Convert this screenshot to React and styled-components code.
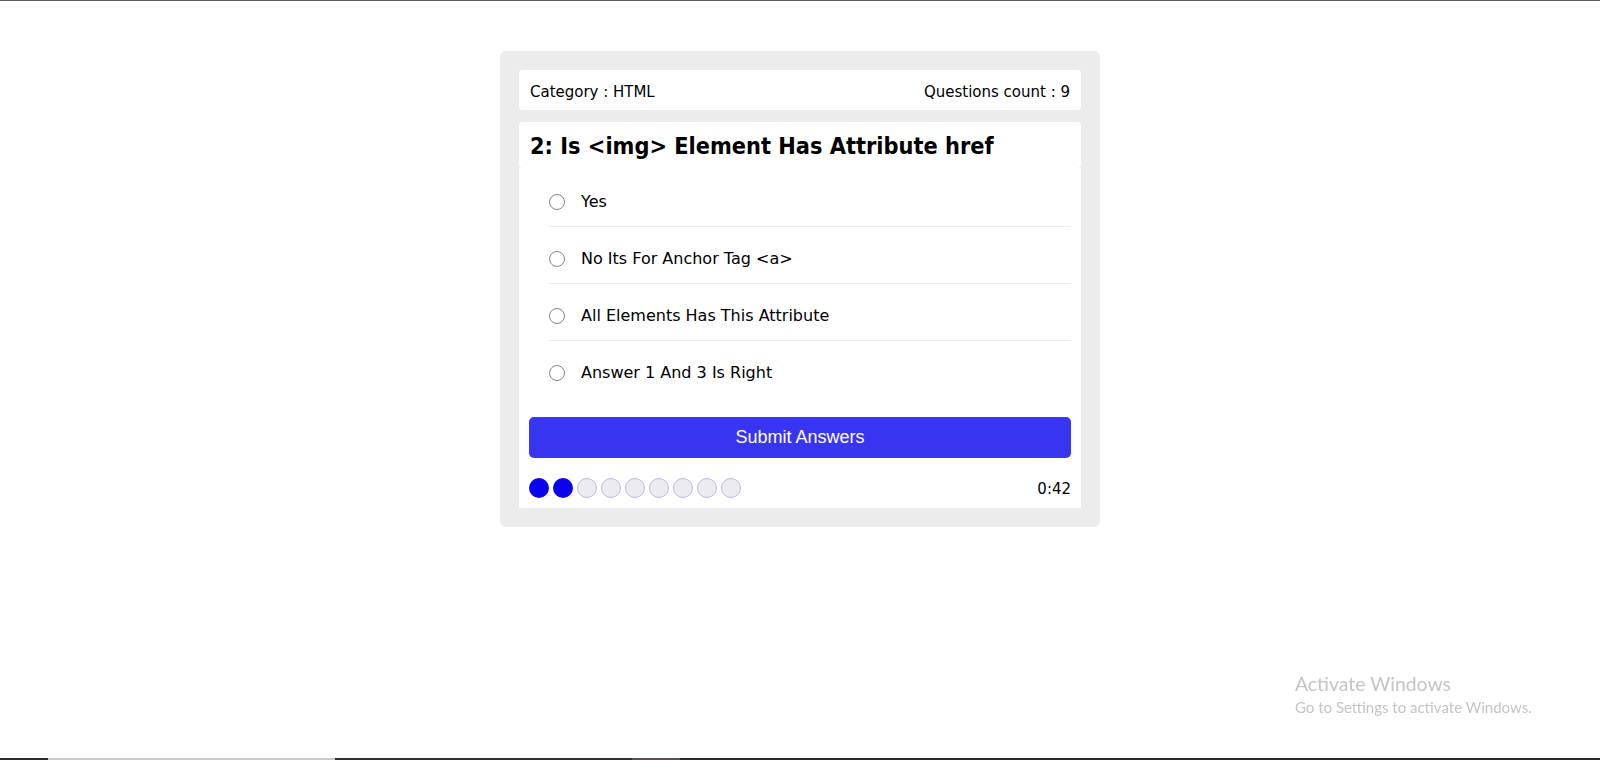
import React from "react";
import styled, { createGlobalStyle } from "styled-components";

const GlobalStyle = createGlobalStyle`
  html, body { margin: 0; padding: 0; background: #ffffff; }
  * { box-sizing: border-box; }
`;

const Screen = styled.div`
  height: 100vh;
  display: flex;
  flex-direction: column;
  overflow: hidden;
`;

const TopEdge = styled.div`
  height: 1px;
  background: #5c5c5c;
  flex: none;
`;

const Stage = styled.main`
  flex: 1;
  display: flex;
  justify-content: center;
  align-items: flex-start;
  padding-top: 50px;
`;

const Taskbar = styled.div`
  height: 2px;
  flex: none;
  background: linear-gradient(
    to right,
    #2d2d2d 0 48px,
    #c9c9c9 48px 335px,
    #2f2f2f 335px 632px,
    #5a5050 632px 680px,
    #2a2a2a 680px 100%
  );
`;

const Card = styled.section`
  width: 600px;
  padding: 19px;
  background: #ececec;
  border-radius: 6px;
`;

const InfoBar = styled.div`
  display: flex;
  justify-content: space-between;
  align-items: center;
  height: 40px;
  padding: 2px 11px 0;
  background: #ffffff;
  border-radius: 4px;
  font-family: "DejaVu Sans Condensed", "DejaVu Sans", sans-serif;
  font-stretch: condensed;
  font-size: 16.67px;
  color: #000;
`;

const QuestionTitle = styled.h2`
  margin: 12px 0 0;
  padding: 9px 11px 7px;
  height: 46px;
  line-height: 30px;
  background: #ffffff;
  border-radius: 4px;
  font-family: "DejaVu Sans Condensed", "DejaVu Sans", sans-serif;
  font-stretch: condensed;
  font-weight: bold;
  font-size: 23.3px;
  color: #000;
  white-space: nowrap;
`;

const AnswersArea = styled.div`
  background: #ffffff;
  padding: 2px 10px 0 30px;
`;

const AnswerRow = styled.label`
  display: flex;
  align-items: center;
  padding: 22px 0 14px;
  border-bottom: 1px solid #ececec;
  &:last-child {
    border-bottom: none;
  }
`;

const Radio = styled.input.attrs({ type: "radio" })`
  appearance: none;
  -webkit-appearance: none;
  width: 16px;
  height: 16px;
  margin: 0 16px 0 0;
  border: 1px solid #858585;
  border-radius: 50%;
  background: #fff;
  flex: none;
`;

const AnswerText = styled.span`
  font-family: "DejaVu Sans", Verdana, sans-serif;
  font-size: 16px;
  line-height: 20px;
  color: #000;
`;

const SubmitArea = styled.div`
  background: #ffffff;
  padding: 20px 10px 10px;
`;

const SubmitButton = styled.button`
  display: block;
  width: 100%;
  height: 41px;
  border: none;
  border-radius: 5px;
  background: #3835f1;
  color: #ffffff;
  font-family: "Liberation Sans", Arial, sans-serif;
  font-size: 18px;
  cursor: pointer;
`;

const Footer = styled.div`
  display: flex;
  justify-content: space-between;
  align-items: center;
  margin-top: 20px;
  height: 20px;
`;

const Bullets = styled.div`
  display: flex;
  gap: 4px;
`;

const Bullet = styled.span`
  width: 20px;
  height: 20px;
  border-radius: 50%;
  background: ${(p) => (p.$done ? "#0a03ee" : "#ebebeb")};
  border: ${(p) => (p.$done ? "none" : "1.3px solid #b8b6f2")};
`;

const Timer = styled.span`
  font-family: "DejaVu Sans Condensed", "DejaVu Sans", sans-serif;
  font-stretch: condensed;
  font-size: 16.67px;
  color: #000;
`;

const Watermark = styled.div`
  position: fixed;
  left: 1295px;
  top: 671px;
  font-family: Lato, "Open Sans", sans-serif;
  color: #c4c4c4;
  pointer-events: none;
`;

const WatermarkTitle = styled.div`
  font-size: 19.4px;
  line-height: 26px;
`;

const WatermarkSub = styled.div`
  font-size: 15px;
  line-height: 20px;
`;

const answers = [
  "Yes",
  "No Its For Anchor Tag <a>",
  "All Elements Has This Attribute",
  "Answer 1 And 3 Is Right",
];

export default function App() {
  const total = 9;
  const current = 2;
  return (
    <>
      <GlobalStyle />
      <Screen>
        <TopEdge />
        <Stage>
          <Card>
            <InfoBar>
              <span>Category : HTML</span>
              <span>Questions count : {total}</span>
            </InfoBar>
            <QuestionTitle>2: Is &lt;img&gt; Element Has Attribute href</QuestionTitle>
            <AnswersArea>
              {answers.map((a, i) => (
                <AnswerRow key={i}>
                  <Radio name="question" />
                  <AnswerText>{a}</AnswerText>
                </AnswerRow>
              ))}
            </AnswersArea>
            <SubmitArea>
              <SubmitButton>Submit Answers</SubmitButton>
              <Footer>
                <Bullets>
                  {Array.from({ length: total }, (_, i) => (
                    <Bullet key={i} $done={i < current} />
                  ))}
                </Bullets>
                <Timer>0:42</Timer>
              </Footer>
            </SubmitArea>
          </Card>
        </Stage>
        <Taskbar />
      </Screen>
      <Watermark>
        <WatermarkTitle>Activate Windows</WatermarkTitle>
        <WatermarkSub>Go to Settings to activate Windows.</WatermarkSub>
      </Watermark>
    </>
  );
}
